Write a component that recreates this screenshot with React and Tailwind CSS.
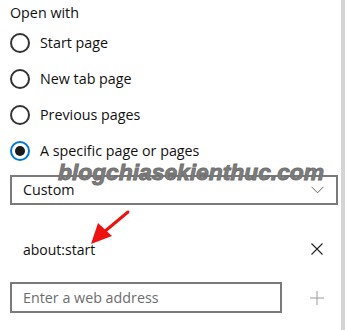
import React from "react";

const font = { fontFamily: '"Open Sans", "Noto Sans", sans-serif' };

function Radio({ label, checked }) {
  return (
    <div className="flex h-[36px] items-center">
      <div
        className={
          "flex h-[20px] w-[20px] items-center justify-center rounded-full border-2 " +
          (checked ? "border-[#0078d7]" : "border-[#333333]")
        }
      >
        {checked && <div className="h-[10px] w-[10px] rounded-full bg-[#1a1a1a]" />}
      </div>
      <span className="ml-[10px] text-[14.3px] text-[#111]">{label}</span>
    </div>
  );
}

export default function App() {
  return (
    <div className="relative h-[330px] w-[345px] overflow-hidden bg-white" style={font}>
      <div className="flex h-full">
        <div className="flex w-[341px] flex-col pl-[10px]">
          <div className="flex h-[25px] items-center pt-[1px] text-[14.3px] text-[#111]">Open with</div>
          <Radio label="Start page" />
          <Radio label="New tab page" />
          <Radio label="Previous pages" />
          <Radio label="A specific page or pages" checked />
          <div className="mt-[6px] flex h-[30px] w-[328px] items-center justify-between border-2 border-[#7a7a7a] pl-[11px] pr-[12px]">
            <span className="text-[14.3px] text-[#111]">Custom</span>
            <svg width="13" height="8" viewBox="0 0 13 8">
              <path d="M0.5 0.8 L6.5 6.8 L12.5 0.8" fill="none" stroke="#666" strokeWidth="1" />
            </svg>
          </div>
          <div className="mt-[27px] flex h-[34px] w-[328px] items-center justify-between pl-[13px] pr-[15px]">
            <span className="text-[14px] text-[#111]">about:start</span>
            <svg width="12" height="12" viewBox="0 0 12 12">
              <path d="M0.5 0.5 L11.5 11.5 M11.5 0.5 L0.5 11.5" stroke="#222" strokeWidth="1.1" />
            </svg>
          </div>
          <div className="mt-[16px] flex w-[328px] items-center justify-between">
            <div className="flex h-[31px] w-[272px] items-center border-2 border-[#7a7a7a] pl-[11px]">
              <span className="text-[14.3px] text-[#6d6d6d]">Enter a web address</span>
            </div>
            <svg width="14" height="14" viewBox="0 0 14 14" className="mr-[14px]">
              <path d="M7 0 L7 14 M0 7 L14 7" stroke="#9a9a9a" strokeWidth="1" />
            </svg>
          </div>
        </div>
        <div className="h-full w-[4px] bg-[#d4d4d4]" />
      </div>

      <div
        className="absolute left-[58px] top-[161px] text-[22.8px] font-bold italic leading-none text-[#7d7d7d]"
        style={{ fontFamily: '"Liberation Sans", Arial, sans-serif', WebkitTextStroke: "0.9px #6e6e6e" }}
      >
        blogchiasekienthuc.com
      </div>

      <svg className="absolute left-0 top-0" width="345" height="330" viewBox="0 0 345 330">
        <path d="M128 212 L104 232" stroke="#ee1111" strokeWidth="3" strokeLinecap="round" />
        <path d="M91 244 L98 223 L112 236 Z" fill="#ee1111" />
      </svg>
    </div>
  );
}
